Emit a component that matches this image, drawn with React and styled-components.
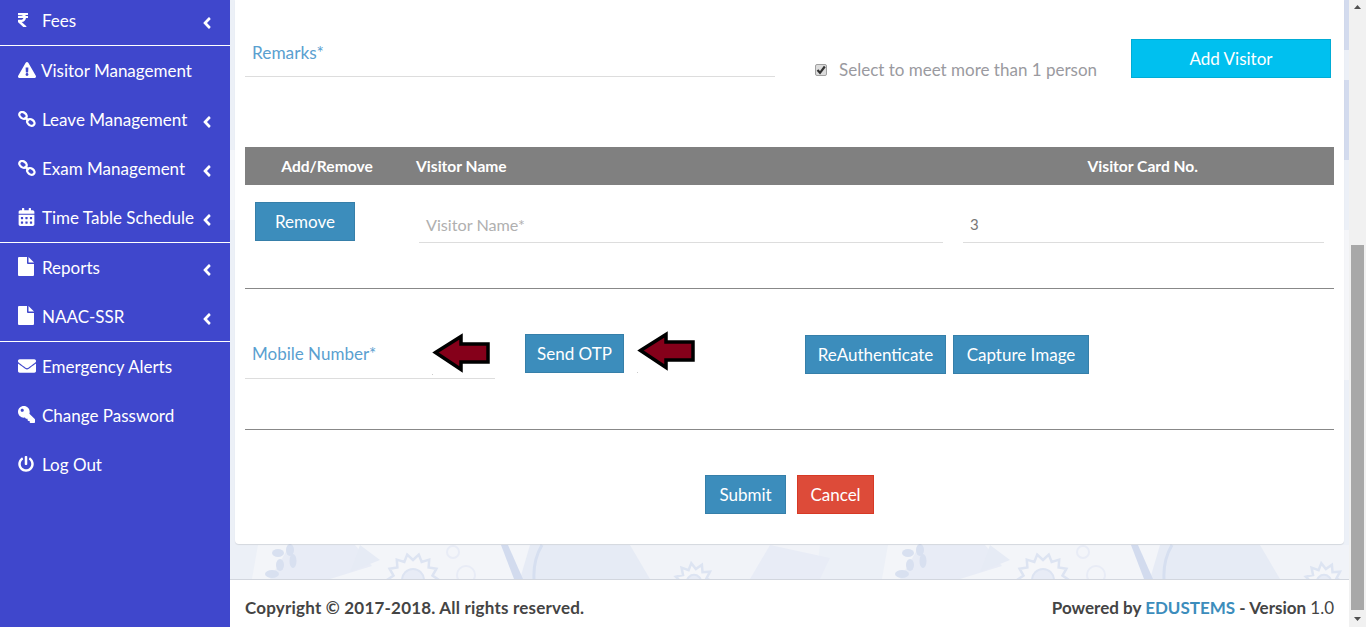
import React from "react";
import styled, { createGlobalStyle } from "styled-components";
import {
  FaRupeeSign, FaExclamationTriangle, FaCalendarAlt,
  FaEnvelope, FaKey, FaPowerOff, FaAngleLeft,
} from "react-icons/fa";

const Global = createGlobalStyle`
  html, body { margin: 0; height: 100%; overflow: hidden; }
  body { font-family: "Lato", "Noto Sans", sans-serif; }
  * { box-sizing: border-box; }
`;

const Shell = styled.div`display: flex; width: 1366px; height: 627px; overflow: hidden;`;

const Sidebar = styled.nav`
  width: 230px; flex: none; background: #3f47cc; color: #fff;
  margin-top: -4px;
`;
const Group = styled.div`border-bottom: ${p => (p.$last ? "none" : "1px solid #fff")};`;
const NavItem = styled.div`
  height: 49px; display: flex; align-items: center; padding-left: 18px; position: relative;
  font-size: 17px; white-space: nowrap;
`;
const NavIcon = styled.span`
  width: ${p => p.$w || 24}px; flex: none; display: flex;
  transform: translateY(-1px);
`;
const Chevron = styled(FaAngleLeft)`
  position: absolute; left: 198px; top: 18px; font-size: 18px;
`;
const FlippedKey = styled(FaKey)`transform: scaleX(-1);`;

const Main = styled.div`flex: 1; min-width: 0; display: flex; flex-direction: column; position: relative;`;
const Backdrop = styled.div`
  flex: 1; background: #ecf0f7; padding: 0 5px; position: relative; overflow: hidden;
`;
const Pattern = styled.svg`position: absolute; left: 0; top: 0; width: 100%; height: 100%; filter: blur(0.7px);`;
const Card = styled.section`
  position: relative; height: 544px; background: #fff; border-radius: 0 0 4px 4px;
  padding: 0 10px; box-shadow: 0 1px 1px rgba(0,0,0,.1); display: flex; flex-direction: column;
`;
const TopRow = styled.div`display: flex; height: 147px; align-items: flex-start;`;
const Field = styled.div`
  width: ${p => p.$w}px; margin-left: ${p => p.$ml || 0}px; margin-top: ${p => p.$mt || 0}px;
  height: ${p => p.$h || 38}px; border-bottom: 1px solid #ddd; padding-left: ${p => p.$pl || 7}px;
  padding-bottom: ${p => p.$pb || 0}px; padding-top: ${p => p.$pt || 0}px;
  display: flex; align-items: center; font-size: ${p => p.$fs || 17}px; flex: none;
  color: ${p => p.$color || "#5aa0d0"};
`;
const CheckLabel = styled.label`
  display: flex; align-items: center; margin-left: 40px; margin-top: 59px; height: 21px;
  font-size: 17px; color: #9a9aa0; width: 316px; flex: none;
`;
const CheckBox = styled.span`
  width: 12px; height: 12px; margin-right: 12px; background: #dcdcdc; border: 1px solid #a0a0a0;
  border-radius: 2px; display: flex; align-items: center; justify-content: center; flex: none;
`;
const Btn = styled.button`
  width: ${p => p.$w}px; height: 39px; flex: none;
  margin-left: ${p => p.$ml || 0}px; margin-top: ${p => p.$mt || 0}px;
  background: ${p => p.$bg || "#3c8dbc"}; border: 1px solid ${p => p.$bd || "#367fa9"};
  color: #fff; font: inherit; font-size: 17px; padding: 0;
`;
const HeadRow = styled.div`
  display: grid; grid-template-columns: 171px 1fr auto; height: 38px; align-items: center;
  background: #808080; color: #fff; font-weight: 700; font-size: 15.6px; padding: 0 136px 0 0;
`;
const HeadCell = styled.div`
  text-align: ${p => (p.$center ? "center" : "left")};
  padding-right: ${p => (p.$center ? 7 : 0)}px;
`;
const VisitorRow = styled.div`display: flex; align-items: flex-start; height: 103px;`;
const Rule = styled.hr`margin: 0; border: 0; border-top: 1px solid #888; flex: none;`;
const OtpRow = styled.div`display: flex; align-items: flex-start; height: 140px; position: relative;`;
const Arrow = styled.svg`position: absolute; left: ${p => p.$x}px; top: ${p => p.$y}px;`;
const Actions = styled.div`display: flex; padding: 45px 0 0 460px;`;

const Footer = styled.footer`
  flex: none; height: 48px; background: #fff; border-top: 1px solid #d2d6de; padding: 18px 15px 0;
  display: flex; justify-content: space-between; color: #444; font-weight: 700; font-size: 17px; line-height: 20px;
`;
const Copy = styled.span`letter-spacing: 0.2px;`;
const Brand = styled.span`color: #3c8dbc;`;
const Light = styled.span`font-weight: 400;`;

const Track = styled.aside`
  width: 17px; flex: none; background: #f1f1f1; display: flex; flex-direction: column;
  align-items: center;
`;
const Spacer = styled.div`height: ${p => p.$h}px; flex: none;`;
const Thumb = styled.div`width: 13px; flex: 1; background: #a8a8a8;`;
const ScrollBtn = styled.svg`flex: none; width: 17px; height: 17px;`;

const Rupee = () => <FaRupeeSign style={{ width: 10, height: 16 }} />;
const ChainIcon = () => (
  <svg width="18" height="16" viewBox="0 0 18 16" fill="none" stroke="#fff" strokeWidth="2.3">
    <ellipse cx="5" cy="4.4" rx="4" ry="3" transform="rotate(35 5 4.4)" />
    <ellipse cx="12.8" cy="11.4" rx="4" ry="3" transform="rotate(35 12.8 11.4)" />
    <path d="M6.5 6.5 L11.2 9.6" />
  </svg>
);
const FileIcon = () => (
  <svg width="16" height="19" viewBox="0 0 16 19" fill="#fff">
    <path d="M0 1 a1 1 0 0 1 1-1 H9 V6 a1 1 0 0 0 1 1 H16 V18 a1 1 0 0 1-1 1 H1 a1 1 0 0 1-1-1 Z" />
    <path d="M10.5 0 L16 5.5 H10.5 Z" />
  </svg>
);
const KeyIcon = () => <FlippedKey size={17} />;
const Triangle = () => <FaExclamationTriangle size={18} />;
const Calendar = () => <FaCalendarAlt style={{ width: 17, height: 18 }} />;
const Mail = () => <FaEnvelope size={18} />;
const Power = () => <FaPowerOff size={16} />;

const Nav = ({ icon: I, w, label, more }) => (
  <NavItem>
    <NavIcon $w={w}><I /></NavIcon>
    {label}
    {more && <Chevron />}
  </NavItem>
);

const Gear = ({ cx, cy, r, teeth = 14 }) => {
  const pts = [];
  for (let i = 0; i < teeth * 2; i++) {
    const a = (i / (teeth * 2)) * Math.PI * 2;
    const rr = i % 2 ? r : r + 6;
    pts.push(`${cx + Math.cos(a) * rr},${cy + Math.sin(a) * rr}`);
  }
  return (
    <g>
      <polygon points={pts.join(" ")} fill="#f5f6f9" stroke="#dde4f2" strokeWidth="2.5" />
      <circle cx={cx} cy={cy} r={r * 0.55} fill="#e8ecf6" stroke="#dde4f2" strokeWidth="2" />
    </g>
  );
};

const Motif = ({ x }) => (
  <g transform={`translate(${x} 0)`}>
    <path d="M28 545 L330 545 L330 579 L22 579 Z" fill="#f3f5f9" />
    <path d="M60 545 L125 545 L142 566 L100 579 L40 579 Z" fill="#e8ecf6" />
    <path d="M300 545 L440 545 L470 579 L290 579 Z" fill="#e6ebf5" />
    <path d="M400 545 L590 545 L585 579 L420 579 Z" fill="#f1f3f8" />
    <path d="M540 545 L600 558 L590 579 L520 579 Z" fill="#e8ecf6" />
    <ellipse cx="48" cy="553" rx="6" ry="4" fill="#d8e0f0" />
    <ellipse cx="60" cy="550" rx="4" ry="6" fill="#d8e0f0" />
    <ellipse cx="63" cy="561" rx="3.5" ry="7" fill="#d8e0f0" />
    <ellipse cx="50" cy="565" rx="4" ry="6" fill="#d8e0f0" />
    <ellipse cx="42" cy="574" rx="7" ry="4" fill="#d8e0f0" />
    <Gear cx={183} cy={580} r={20} />
    <circle cx={236} cy={575} r={9} fill="none" stroke="#e8ecf6" strokeWidth="2" />
    <circle cx={223} cy={552} r={6} fill="none" stroke="#e8ecf6" strokeWidth="2" />
    <polygon points="271,545 278,545 293,579 284,579" fill="#d2dbee" />
    <path d="M312 545 Q303 560 304 579" fill="none" stroke="#d6dff0" strokeWidth="3" />
    <Gear cx={464} cy={582} r={13} teeth={11} />
    <path d="M130 545 L150 560 L120 572 Z" fill="#e6ebf5" />
    <path d="M0 150 h5 v70 h-5z" fill="#f4f6fa" />
  </g>
);

const ArrowShape = ({ x, y }) => (
  <Arrow $x={x} $y={y} width="62" height="44" viewBox="0 0 62 44">
    <polygon points="3.5,19.5 29,3.5 29,11 56,11 56,29 29,29 29,36.5" fill="#85001a" stroke="#000" strokeWidth="3.5" />
    <rect x="0" y="41" width="1" height="1" fill="#ccc" />
  </Arrow>
);

export default function App() {
  return (
    <Shell>
      <Global />
      <Sidebar>
        <Group>
          <Nav icon={Rupee} label="Fees" more />
        </Group>
        <Group>
          <Nav icon={Triangle} w={23} label="Visitor Management" />
          <Nav icon={ChainIcon} label="Leave Management" more />
          <Nav icon={ChainIcon} label="Exam Management" more />
          <Nav icon={Calendar} label="Time Table Schedule" more />
        </Group>
        <Group>
          <Nav icon={FileIcon} label="Reports" more />
          <Nav icon={FileIcon} label="NAAC-SSR" more />
        </Group>
        <Group $last>
          <Nav icon={Mail} label="Emergency Alerts" />
          <Nav icon={KeyIcon} label="Change Password" />
          <Nav icon={Power} label="Log Out" />
        </Group>
      </Sidebar>
      <Main>
        <Backdrop>
          <Pattern viewBox="0 0 1119 579" preserveAspectRatio="none">
            <Motif x={0} />
            <Motif x={630} />
            <path d="M1114 0 h5 v50 h-5z M1114 80 h5 v80 h-5z" fill="#d3dbee" />
            <path d="M1114 230 h5 v150 h-5z" fill="#f5f6f9" />
          </Pattern>
          <Card>
            <TopRow>
              <Field $w={530} $mt={39} $pb={11} $fs={17.3}>Remarks*</Field>
              <CheckLabel>
                <CheckBox>
                  <svg width="10" height="10" viewBox="0 0 10 10" fill="none" stroke="#333" strokeWidth="2.2">
                    <path d="M1.5 5 L4 7.8 L8.8 1.5" />
                  </svg>
                </CheckBox>
                Select to meet more than 1 person
              </CheckLabel>
              <Btn $w={200} $mt={39} $bg="#00c0ef" $bd="#00acd6">Add Visitor</Btn>
            </TopRow>
            <HeadRow>
              <HeadCell $center>Add/Remove</HeadCell>
              <HeadCell>Visitor Name</HeadCell>
              <HeadCell>Visitor Card No.</HeadCell>
            </HeadRow>
            <VisitorRow>
              <Btn $w={100} $ml={10} $mt={17}>Remove</Btn>
              <Field $w={524} $ml={64} $mt={19} $h={39} $pt={2} $fs={16.2} $color="#b0b0b0">Visitor Name*</Field>
              <Field $w={361} $ml={20} $mt={19} $h={39} $pt={2} $fs={15} $color="#777">3</Field>
            </VisitorRow>
            <Rule />
            <OtpRow>
              <Field $w={250} $mt={46} $h={44} $pb={6}>Mobile Number*</Field>
              <Btn $w={99} $ml={30} $mt={45}>Send OTP</Btn>
              <Btn $w={141} $ml={181} $mt={46}>ReAuthenticate</Btn>
              <Btn $w={136} $ml={7} $mt={46}>Capture Image</Btn>
              <ArrowShape x={187} y={44} />
              <ArrowShape x={392} y={42} />
            </OtpRow>
            <Rule />
            <Actions>
              <Btn $w={81}>Submit</Btn>
              <Btn $w={77} $ml={11} $bg="#dd4b39" $bd="#d73925">Cancel</Btn>
            </Actions>
          </Card>
        </Backdrop>
        <Footer>
          <Copy>Copyright © 2017-2018. All rights reserved.</Copy>
          <span>Powered by <Brand>EDUSTEMS</Brand> - Version <Light>1.0</Light></span>
        </Footer>
      </Main>
      <Track>
        <ScrollBtn viewBox="0 0 17 17"><polygon points="5,9 8.5,5 12,9" fill="#505050" /></ScrollBtn>
        <Spacer $h={228} />
        <Thumb />
        <ScrollBtn viewBox="0 0 17 17"><polygon points="5,7 8.5,11 12,7" fill="#505050" /></ScrollBtn>
      </Track>
    </Shell>
  );
}
